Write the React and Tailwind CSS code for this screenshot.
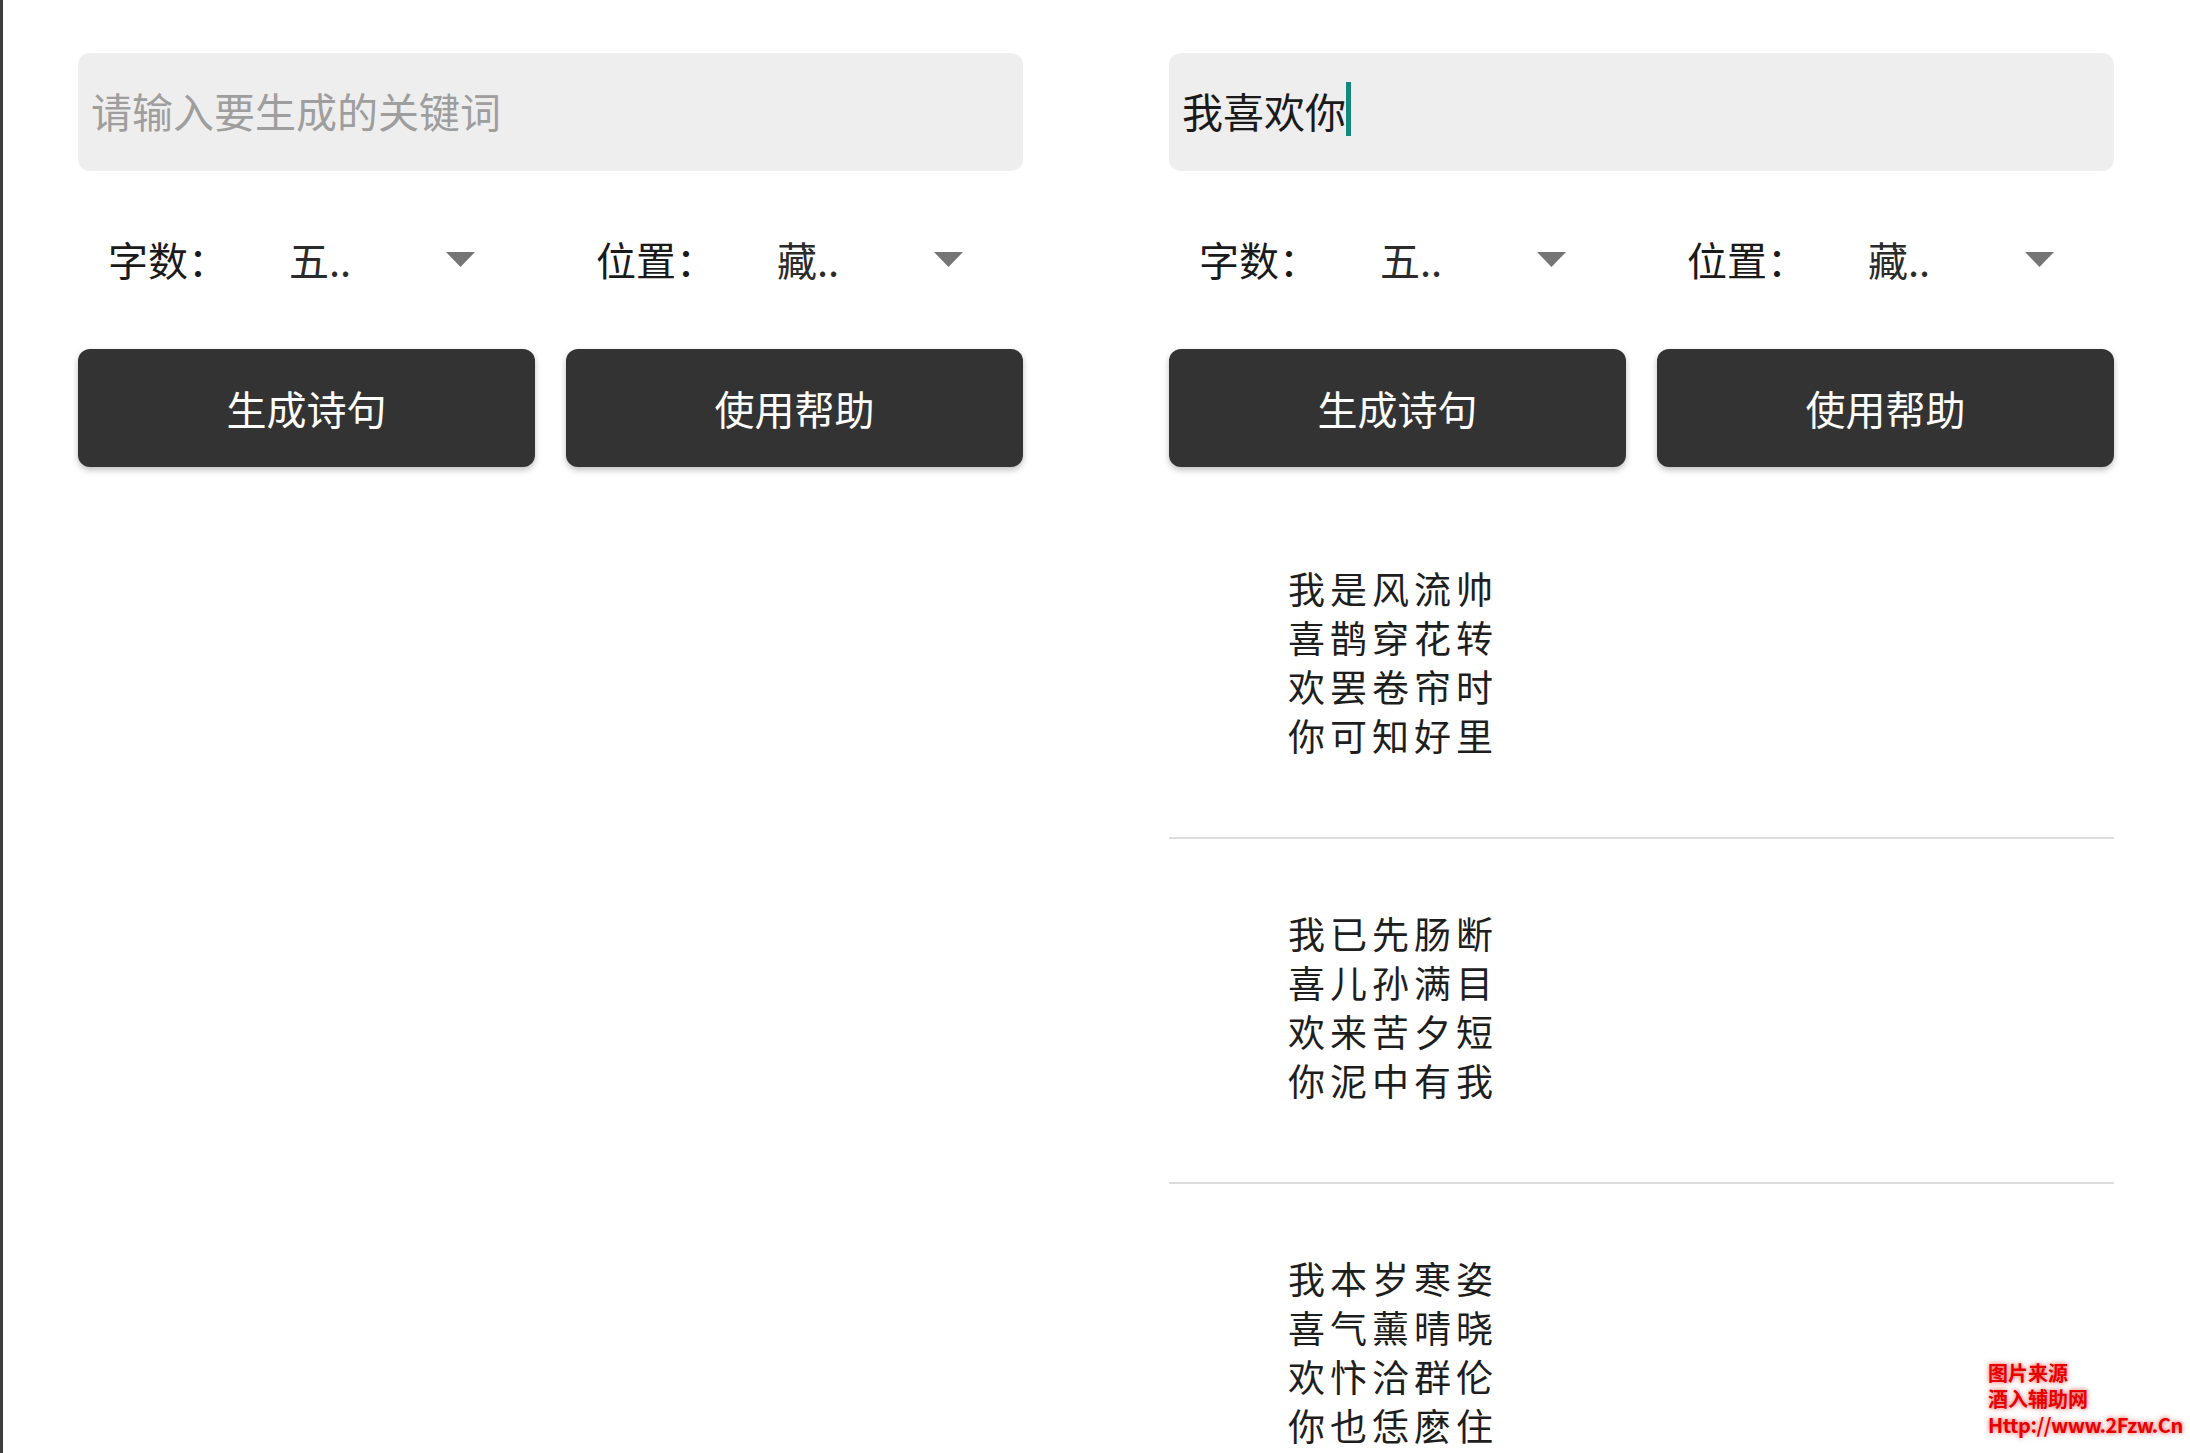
import React from "react";

// Two phone screens side by side: empty keyword form, and a filled one with results.

const POEMS = [
  ["我是风流帅", "喜鹊穿花转", "欢罢卷帘时", "你可知好里"],
  ["我已先肠断", "喜儿孙满目", "欢来苦夕短", "你泥中有我"],
  ["我本岁寒姿", "喜气薰晴晓", "欢忭洽群伦", "你也恁麽住"],
];

function Caret() {
  return (
    <svg width="29" height="15" viewBox="0 0 29 15" className="shrink-0">
      <polygon points="0,0 29,0 14.5,15" fill="#757575" />
    </svg>
  );
}

function Spinner({ label, value }) {
  return (
    <div className="flex items-center pl-[30px] h-[60px]">
      <span className="w-[181px] text-[40px] leading-[60px] text-[#1a1a1a]">{label}</span>
      <span className="w-[157px] text-[40px] leading-[60px] text-[#2b2b2b]">{value}</span>
      <Caret />
    </div>
  );
}

function Panel({ text, poems }) {
  return (
    <div className="w-[945px] shrink-0 pt-[53px]">
      {/* keyword input */}
      <div className="h-[118px] rounded-[12px] bg-[#eeeeee] px-[13px] pb-[5px] flex items-center">
        {text ? (
          <>
            <span className="text-[41px] leading-[60px] text-[#1a1a1a]">{text}</span>
            <span className="w-[5px] h-[54px] bg-[#14897b] -mt-[2px]" />
          </>
        ) : (
          <span className="text-[41px] leading-[60px] text-[#9e9e9e]">请输入要生成的关键词</span>
        )}
      </div>

      {/* spinners */}
      <div className="mt-[58px] grid grid-cols-2 gap-[31px]">
        <Spinner label="字数：" value="五.." />
        <Spinner label="位置：" value="藏.." />
      </div>

      {/* actions */}
      <div className="mt-[60px] grid grid-cols-2 gap-[31px]">
        <button className="h-[118px] rounded-[12px] bg-[#333333] text-white text-[40px] shadow-[0_3px_6px_rgba(0,0,0,0.25)]">
          生成诗句
        </button>
        <button className="h-[118px] rounded-[12px] bg-[#333333] text-white text-[40px] shadow-[0_3px_6px_rgba(0,0,0,0.25)]">
          使用帮助
        </button>
      </div>

      {/* results */}
      {poems && (
        <div className="mt-[27px]">
          {poems.map((p, i) => (
            <div
              key={i}
              className="border-b-2 border-[#dddddd] pt-[70px] pb-[77px] pl-[119px] text-[37px] leading-[49px] tracking-[5px] text-[#1e1e1e]"
            >
              {p.map((line) => (
                <div key={line}>{line}</div>
              ))}
            </div>
          ))}
        </div>
      )}
    </div>
  );
}

export default function App() {
  return (
    <div className="relative w-[2190px] h-[1453px] overflow-hidden bg-white border-l-[3px] border-[#3c3c3c] flex pl-[75px] gap-[146px] font-['Noto_Sans_CJK_SC','Noto_Sans',sans-serif]">
      <Panel />
      <Panel text="我喜欢你" poems={POEMS} />

      {/* watermark */}
      <div className="absolute left-[1985px] top-[1360px] text-[20px] leading-[26px] font-bold text-[#e60000] [text-shadow:0_0_5px_rgba(220,0,0,0.75)]">
        <div>图片来源</div>
        <div>酒入辅助网</div>
        <div className="tracking-[-0.5px]">Http://www.2Fzw.Cn</div>
      </div>
    </div>
  );
}
